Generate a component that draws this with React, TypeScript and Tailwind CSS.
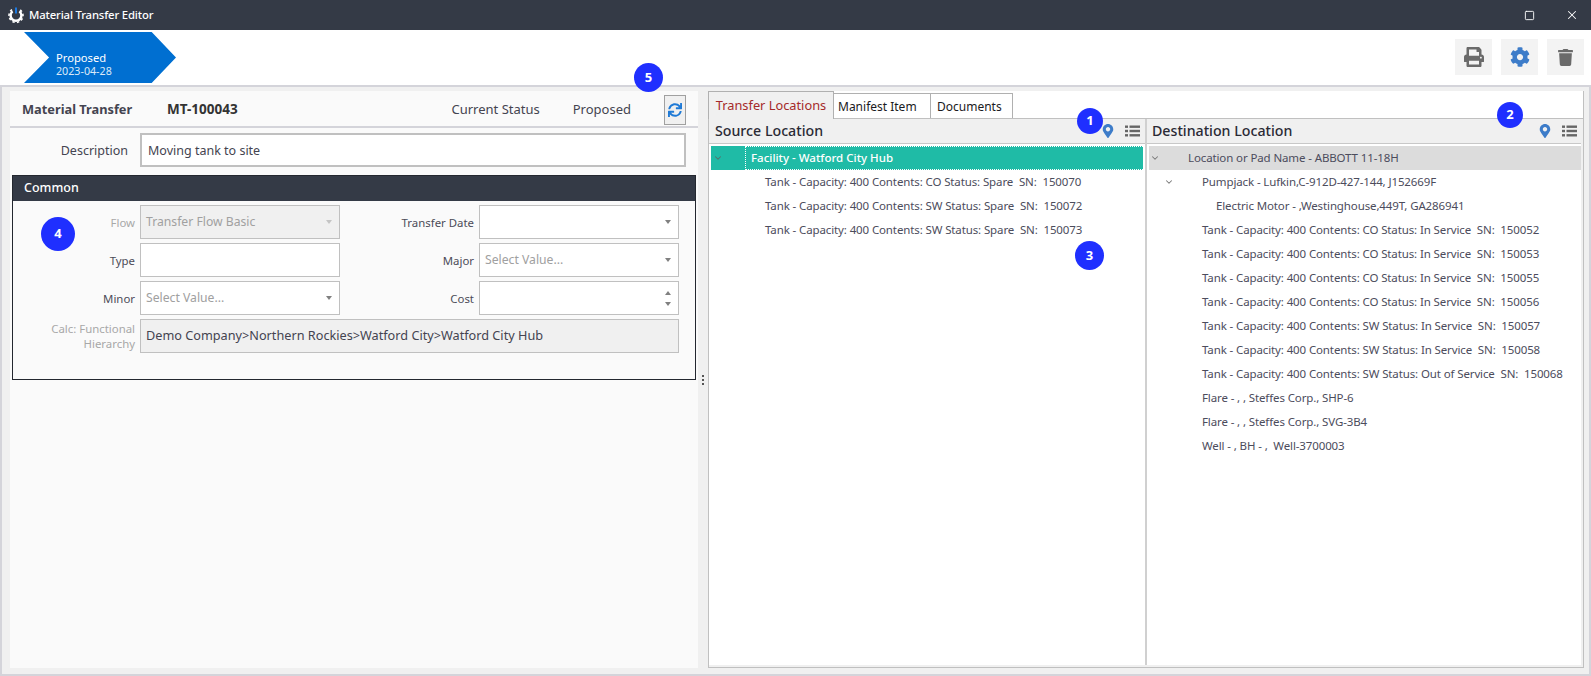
import React from "react";
import { FaMapMarkerAlt, FaPrint, FaCog, FaTrash, FaSync } from "react-icons/fa";
import { ChevronDown, Square, X } from "lucide-react";

const sourceRows = [
  "Tank - Capacity: 400 Contents: CO Status: Spare  SN:  150070",
  "Tank - Capacity: 400 Contents: SW Status: Spare  SN:  150072",
  "Tank - Capacity: 400 Contents: SW Status: Spare  SN:  150073",
];

const destRows = [
  "Tank - Capacity: 400 Contents: CO Status: In Service  SN:  150052",
  "Tank - Capacity: 400 Contents: CO Status: In Service  SN:  150053",
  "Tank - Capacity: 400 Contents: CO Status: In Service  SN:  150055",
  "Tank - Capacity: 400 Contents: CO Status: In Service  SN:  150056",
  "Tank - Capacity: 400 Contents: SW Status: In Service  SN:  150057",
  "Tank - Capacity: 400 Contents: SW Status: In Service  SN:  150058",
  "Tank - Capacity: 400 Contents: SW Status: Out of Service  SN:  150068",
  "Flare - , , Steffes Corp., SHP-6",
  "Flare - , , Steffes Corp., SVG-3B4",
  "Well - , BH - ,  Well-3700003",
];

const treeText = "text-[11.5px] tracking-[-0.12px] text-[#4c4c5c]";

function Badge({ n, className }: { n: number; className: string }) {
  return (
    <div className={`absolute flex items-center justify-center rounded-full bg-[#1f2fff] text-white font-bold text-[13px] ${className}`}>
      {n}
    </div>
  );
}

function Caret({ up, light }: { up?: boolean; light?: boolean }) {
  return (
    <span
      className={`w-0 h-0 border-x-[3.5px] border-x-transparent ${up ? "border-b-[4px]" : "border-t-[4px]"} ${
        light ? "border-t-[#c4c4c4]" : "border-t-[#808080] border-b-[#808080]"
      }`}
    />
  );
}

function Label({ children, muted }: { children: React.ReactNode; muted?: boolean }) {
  return (
    <div className={`flex items-center justify-end pr-[5px] text-[11.4px] text-right leading-[15px] ${muted ? "text-[#a8a8a8]" : "text-[#4c4c58]"}`}>
      {children}
    </div>
  );
}

function Field({ value, placeholder, disabled, caret, spin }: { value?: string; placeholder?: string; disabled?: boolean; caret?: boolean; spin?: boolean }) {
  return (
    <div className={`h-[34px] flex items-center justify-between pl-[5px] pr-[7px] border border-[#c0c0c0] text-[12.2px] ${disabled ? "bg-[#f0f0f0] text-[#a0a0a0]" : "bg-white text-[#a0a0a0]"}`}>
      <span>{value || placeholder}</span>
      {caret && <Caret light={disabled} />}
      {spin && (
        <span className="flex flex-col gap-[7px]">
          <Caret up />
          <Caret />
        </span>
      )}
    </div>
  );
}

function TreeRow({ text, indent }: { text: string; indent: string }) {
  return <div className={`h-[24px] flex items-center whitespace-pre ${treeText} ${indent}`}>{text}</div>;
}

function ListIcon() {
  return (
    <svg width="15" height="12" viewBox="0 0 15 12" fill="#666">
      <rect x="0" y="0.5" width="3" height="2.4" />
      <rect x="4.5" y="0.5" width="10.5" height="2.4" />
      <rect x="0" y="4.8" width="3" height="2.4" />
      <rect x="4.5" y="4.8" width="10.5" height="2.4" />
      <rect x="0" y="9.1" width="3" height="2.4" />
      <rect x="4.5" y="9.1" width="10.5" height="2.4" />
    </svg>
  );
}

function PaneHeader({ title, pad }: { title: string; pad: string }) {
  return (
    <div className={`h-[25px] shrink-0 flex items-center justify-between bg-[#f0f0f0] border-b border-[#c8c8c8] ${pad}`}>
      <span className="text-[14.2px] font-medium text-[#2a2a35]">{title}</span>
      <div className="flex items-center gap-[10px]">
        <FaMapMarkerAlt className="text-[#3d7cc9] text-[14px]" />
        <ListIcon />
      </div>
    </div>
  );
}

export default function App() {
  return (
    <div className="relative w-[1591px] h-[676px] flex flex-col overflow-hidden bg-[#f0f0f0] font-['Noto_Sans',sans-serif]">
      {/* title bar */}
      <div className="h-[30px] shrink-0 flex items-center justify-between bg-[#343a46] text-white">
        <div className="flex items-center pl-[8px] gap-[5px]">
          <svg width="16" height="17" viewBox="0 0 16 17">
            <path d="M4.6 4.2A5.4 5.4 0 1 0 11.4 4.2" fill="none" stroke="#fff" strokeWidth="2.4" />
            <path d="M4 2.7A7 7 0 1 0 12 2.7" fill="none" stroke="#fff" strokeWidth="1.6" strokeDasharray="2.4 2.2" />
            <path d="M8 0.5v6" stroke="#1f7ae0" strokeWidth="2" />
          </svg>
          <span className="text-[11.3px] font-medium tracking-[-0.15px]">Material Transfer Editor</span>
        </div>
        <div className="flex items-center gap-[30px] pr-[12px]">
          <Square size={11} strokeWidth={2} />
          <X size={14} strokeWidth={1.75} />
        </div>
      </div>

      {/* stage + actions */}
      <div className="h-[57px] shrink-0 flex items-start justify-between bg-white border-b-2 border-[#d4d4da]">
        <div className="ml-[24px] mt-[2px] w-[152px] h-[51px] flex flex-col justify-center pl-[32px] pt-[12px] bg-[#006fd1] text-white [clip-path:polygon(0_0,84%_0,100%_50%,84%_100%,0_100%,16.5%_50%)]">
          <span className="text-[11.2px] leading-[15px]">Proposed</span>
          <span className="text-[10.7px] leading-[13px] text-[#dbe9f8]">2023-04-28</span>
        </div>
        <div className="flex gap-[9px] pr-[7px] pt-[9px]">
          <div className="w-[37px] h-[36px] flex items-center justify-center bg-[#f3f3f3] text-[#6a6a6a] text-[20px]"><FaPrint /></div>
          <div className="w-[37px] h-[36px] flex items-center justify-center bg-[#f3f3f3] text-[#3d7cc9] text-[20px]"><FaCog /></div>
          <div className="w-[37px] h-[36px] flex items-center justify-center bg-[#f3f3f3] text-[#6a6a6a] text-[17px]"><FaTrash /></div>
        </div>
      </div>

      {/* main */}
      <div className="flex-1 min-h-0 flex pl-[8px] pr-[5px] pt-[4px] pb-[6px] border-x-2 border-b-2 border-[#d4d4da]">
        {/* left */}
        <div className="w-[688px] shrink-0 flex flex-col bg-[#fafafa]">
          <div className="h-[37px] flex items-center border-b-2 border-[#d4d4da] pt-[2px] text-[13px] text-[#444450]">
            <span className="ml-[12px] w-[145px] text-[12.8px] font-bold">Material Transfer</span>
            <span className="text-[13.5px] font-bold text-[#333]">MT-100043</span>
            <span className="ml-auto">Current Status</span>
            <span className="ml-[33px]">Proposed</span>
            <div className="ml-[33px] mr-[12px] w-[22px] h-[30px] flex items-center justify-center border border-[#a0a0a0] bg-[#f0f0f0] text-[#1f7ad6] text-[14px]">
              <FaSync />
            </div>
          </div>
          <div className="h-[47px] flex items-start pt-[5px]">
            <span className="w-[118px] h-[34px] flex items-center justify-end pt-[2px] text-[12.5px] text-[#444450]">Description</span>
            <div className="ml-[12px] w-[546px] h-[34px] flex items-center pl-[6px] pt-[2px] border-2 border-[#c0c0c0] bg-white text-[12.5px] text-[#444450]">
              Moving tank to site
            </div>
          </div>
          <div className="mx-[2px] h-[205px] border border-[#23272f] bg-[#fafafa]">
            <div className="h-[25px] flex items-center pl-[11px] bg-[#343a46] text-white text-[12.5px] font-medium">Common</div>
            <div className="grid grid-cols-[127px_200px_139px_200px] auto-rows-[34px] gap-y-[4px] pt-[4px]">
              <Label muted>Flow</Label>
              <Field value="Transfer Flow Basic" disabled caret />
              <Label>Transfer Date</Label>
              <Field caret />
              <Label>Type</Label>
              <Field />
              <Label>Major</Label>
              <Field placeholder="Select Value..." caret />
              <Label>Minor</Label>
              <Field placeholder="Select Value..." caret />
              <Label>Cost</Label>
              <Field spin />
              <Label muted>Calc: Functional Hierarchy</Label>
              <div className="col-span-3 h-[34px] flex items-center pl-[5px] border border-[#c0c0c0] bg-[#f0f0f0] text-[12.7px] text-[#444450]">
                Demo Company&gt;Northern Rockies&gt;Watford City&gt;Watford City Hub
              </div>
            </div>
          </div>
        </div>

        {/* splitter */}
        <div className="w-[10px] shrink-0 flex flex-col items-center justify-center gap-[2px]">
          <span className="w-[2px] h-[2px] bg-[#555]" />
          <span className="w-[2px] h-[2px] bg-[#555]" />
          <span className="w-[2px] h-[2px] bg-[#555]" />
        </div>

        {/* right */}
        <div className="flex-1 min-w-0 flex flex-col bg-[#f0f0f0] border-x border-b border-[#c0c0c0]">
          <div className="h-[28px] shrink-0 flex items-end border-b border-[#c0c0c0] text-[12px] text-[#1a1a22] bg-white">
            <div className="w-[126px] h-[28px] -mb-px -ml-px flex items-center justify-center border border-b-0 border-[#b0b0b0] bg-[#f0f0f0] text-[12.8px] text-[#a52a2a]">Transfer Locations</div>
            <div className="w-[97px] h-[25px] flex items-center pl-[4px] pt-[1px] border-t border-r border-[#b0b0b0]">Manifest Item</div>
            <div className="w-[82px] h-[25px] flex items-center pl-[6px] pt-[1px] border-t border-r border-[#b0b0b0]">Documents</div>
          </div>
          <div className="flex-1 min-h-0 flex mr-[2px] mb-[2px] bg-white">
            <div className="w-[438px] shrink-0 flex flex-col border-r-2 border-[#d0d0d0]">
              <PaneHeader title="Source Location" pad="pl-[6px] pr-[5px]" />
              <div className="pt-[2px] pl-[2px] pr-[2px]">
                <div className="h-[24px] flex items-center bg-[#1fbba6]">
                  <ChevronDown size={10} className="ml-[2px] text-[#55706c]" strokeWidth={2.5} />
                  <span className="ml-[22px] h-full flex items-center pl-[5px] flex-1 border border-dotted border-white border-r-0 text-white text-[11.5px] font-medium">
                    Facility - Watford City Hub
                  </span>
                </div>
                {sourceRows.map((row) => (
                  <TreeRow key={row} text={row} indent="pl-[54px]" />
                ))}
              </div>
            </div>
            <div className="flex-1 min-w-0 flex flex-col">
              <PaneHeader title="Destination Location" pad="pl-[5px] pr-[4px]" />
              <div className="pt-[2px] pl-[2px]">
                <div className={`h-[24px] flex items-center bg-[#dcdcdc] ${treeText}`}>
                  <ChevronDown size={10} className="ml-[1px] text-[#777]" strokeWidth={2.5} />
                  <span className="ml-[28px]">Location or Pad Name - ABBOTT 11-18H</span>
                </div>
                <div className={`h-[24px] flex items-center ${treeText}`}>
                  <ChevronDown size={10} className="ml-[15px] text-[#777]" strokeWidth={2.5} />
                  <span className="ml-[28px]">Pumpjack - Lufkin,C-912D-427-144, J152669F</span>
                </div>
                <TreeRow text="Electric Motor - ,Westinghouse,449T, GA286941" indent="pl-[67px]" />
                {destRows.map((row) => (
                  <TreeRow key={row} text={row} indent="pl-[53px]" />
                ))}
              </div>
            </div>
          </div>
        </div>
      </div>

      <Badge n={5} className="left-[634px] top-[63px] w-[29px] h-[29px]" />
      <Badge n={1} className="left-[1077px] top-[108px] w-[26px] h-[26px]" />
      <Badge n={2} className="left-[1497px] top-[102px] w-[26px] h-[26px]" />
      <Badge n={3} className="left-[1075px] top-[241px] w-[29px] h-[29px]" />
      <Badge n={4} className="left-[41px] top-[217px] w-[34px] h-[34px]" />
    </div>
  );
}
